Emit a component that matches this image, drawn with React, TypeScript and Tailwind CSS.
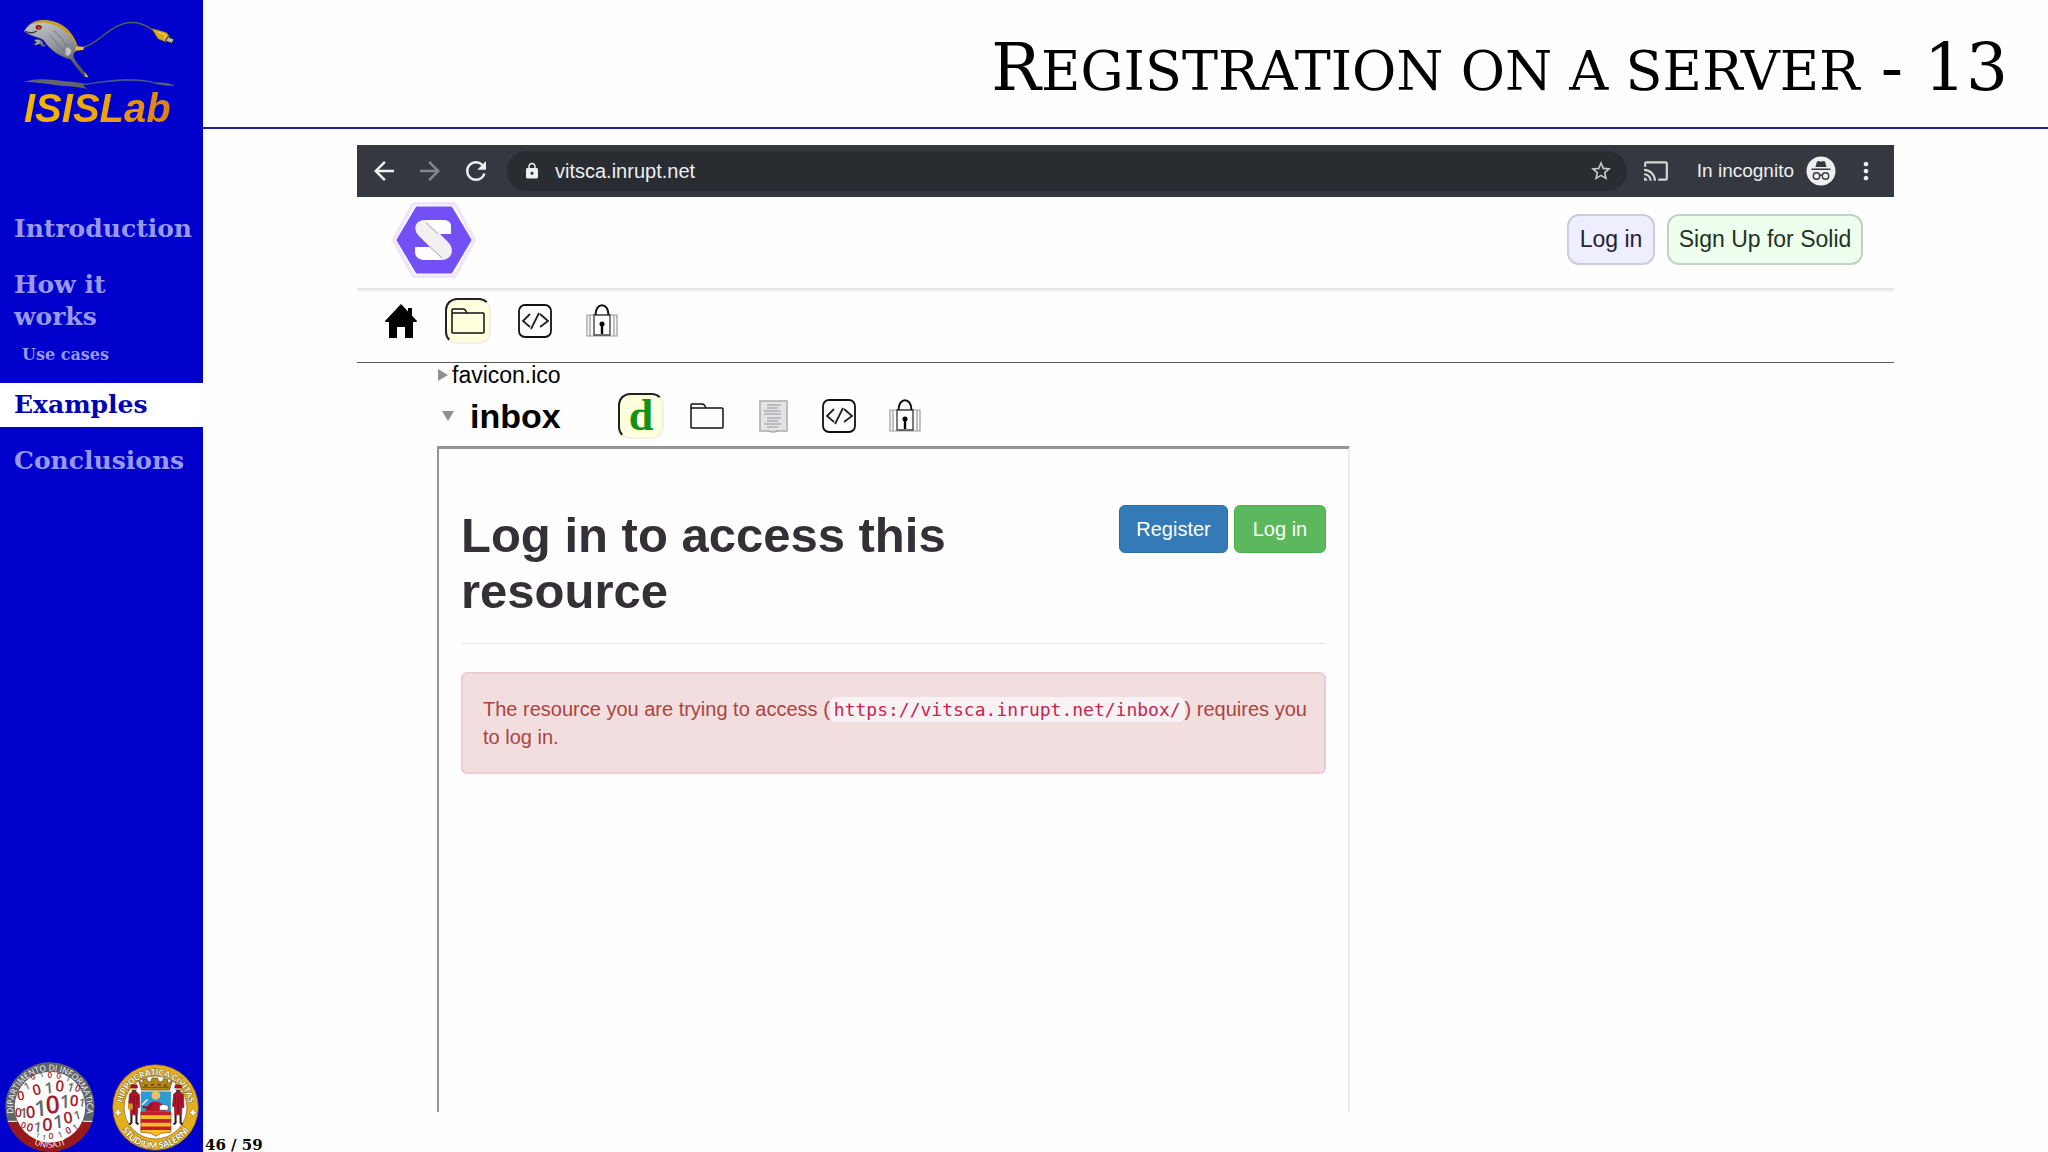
import type { ReactNode } from 'react'
import { MdArrowBack, MdArrowForward, MdCast, MdLock, MdMoreVert, MdRefresh, MdStarBorder } from 'react-icons/md'

const DIGITS = [
    { x: 88, y: 52, size: 24, rotate: -30, value: '0' },
    { x: 112, y: 46, size: 22, rotate: -15, value: '1' },
    { x: 134, y: 48, size: 24, rotate: 0, value: '0' },
    { x: 160, y: 50, size: 24, rotate: 10, value: '0' },
    { x: 186, y: 58, size: 24, rotate: 25, value: '1' },
    { x: 70, y: 82, size: 30, rotate: -25, value: '1' },
    { x: 99, y: 98, size: 44, rotate: -15, value: '0' },
    { x: 133, y: 94, size: 46, rotate: -5, value: '1' },
    { x: 163, y: 88, size: 46, rotate: 5, value: '0' },
    { x: 194, y: 88, size: 36, rotate: 15, value: '1' },
    { x: 214, y: 88, size: 28, rotate: 25, value: '0' },
    { x: 50, y: 114, size: 38, rotate: -10, value: '0' },
    { x: 40, y: 166, size: 36, rotate: 0, value: '0' },
    { x: 56, y: 168, size: 42, rotate: 0, value: '1' },
    { x: 78, y: 168, size: 50, rotate: -4, value: '0' },
    { x: 108, y: 162, size: 66, rotate: -4, value: '1' },
    { x: 145, y: 154, size: 74, rotate: -4, value: '0' },
    { x: 180, y: 138, size: 54, rotate: 0, value: '1' },
    { x: 207, y: 132, size: 46, rotate: 4, value: '0' },
    { x: 229, y: 134, size: 34, rotate: 10, value: '1' },
    { x: 52, y: 198, size: 26, rotate: 20, value: '0' },
    { x: 72, y: 208, size: 34, rotate: 15, value: '0' },
    { x: 97, y: 210, size: 42, rotate: 5, value: '1' },
    { x: 127, y: 208, size: 54, rotate: 0, value: '0' },
    { x: 162, y: 198, size: 54, rotate: -5, value: '1' },
    { x: 192, y: 184, size: 48, rotate: -10, value: '0' },
    { x: 220, y: 172, size: 36, rotate: -15, value: '1' },
    { x: 96, y: 226, size: 18, rotate: 20, value: '1' },
    { x: 116, y: 234, size: 22, rotate: 10, value: '1' },
    { x: 138, y: 232, size: 26, rotate: 0, value: '0' },
    { x: 168, y: 226, size: 24, rotate: -15, value: '1' },
    { x: 194, y: 214, size: 28, rotate: -25, value: '0' },
    { x: 216, y: 202, size: 24, rotate: -35, value: '1' },
]

const LabLogo = () => (
    <svg viewBox="0 0 480 228" className="w-40 h-[76px]" aria-hidden="true">
        <defs>
            <linearGradient id="body" x1="0" y1="0" x2="0.4" y2="1">
                <stop offset="0" stopColor="#c9ccd2" />
                <stop offset="0.5" stopColor="#9a9ca4" />
                <stop offset="1" stopColor="#55575f" />
            </linearGradient>
        </defs>
        <path d="M178 98 C236 88 272 20 336 20 C362 20 380 30 398 42" fill="none" stroke="#333b4c" strokeWidth="5" />
        <path d="M178 97 C236 87 272 19 336 19 C362 19 380 29 398 41" fill="none" stroke="#8c8f92" strokeWidth="1.5" />
        <path d="M396 38 L412 42 L440 50 L450 64 L438 78 L414 68 L404 52 Z" fill="#d9ab1c" stroke="#8d6c17" strokeWidth="1.5" />
        <path d="M414 48 L438 58 L432 68" fill="none" stroke="#f6dc66" strokeWidth="3" />
        <path d="M444 62 L462 70 L456 82 L436 75 Z" fill="#b8b8b8" stroke="#222" strokeWidth="3" />
        <path d="M42 72 C58 66 68 74 70 84 L58 84 L48 88 L40 84 L50 80 Z" fill="#a6a8ae" stroke="#333" strokeWidth="1.5" />
        <path d="M60 76 C66 86 62 90 76 88" fill="none" stroke="#777a82" strokeWidth="5" />
        <path d="M12 46 C32 10 74 6 112 20 C148 36 164 62 174 96 L170 104 C156 112 158 124 172 142 C188 160 196 174 204 184 L194 182 C180 168 164 148 152 130 C112 120 88 98 70 72 C52 62 28 60 12 46 Z" fill="url(#body)" stroke="#4c4e58" strokeWidth="1.5" />
        <path d="M22 32 C46 6 84 8 116 22 C148 38 164 66 174 92 C148 56 126 34 94 24 C66 16 42 20 22 32 Z" fill="#c79e20" />
        <path d="M168 90 L192 93 L190 102 L166 104 Z" fill="#e5bd25" />
        <path d="M140 92 C158 96 158 112 144 120 C132 118 132 104 140 92 Z" fill="#c4c6ca" stroke="#777982" strokeWidth="1.5" />
        <path d="M88 56 C108 72 118 98 140 110 M100 44 C122 58 130 76 140 92" fill="none" stroke="#74767f" strokeWidth="3" />
        <path d="M16 46 C30 52 42 52 50 44" fill="none" stroke="#3c3d46" strokeWidth="4" />
        <path d="M194 168 L206 184 L196 182 Z" fill="#e6bd43" />
        <ellipse cx="56" cy="34" rx="9" ry="7" fill="#73220e" />
        <circle cx="57" cy="35" r="4" fill="#e6390f" />
        <path d="M12 198 C52 184 98 192 134 196 C166 198 190 202 204 206 L188 208 L202 218 L164 212 C104 210 80 200 12 198 Z" fill="#63656d" />
        <path d="M190 206 C272 190 350 184 406 200 C440 200 452 204 462 208 C440 210 410 204 400 200 C350 188 272 194 190 206 Z" fill="#63656d" stroke="#4d568f" strokeWidth="2" />
    </svg>
)

const DepartmentSeal = () => (
    <svg viewBox="0 0 270 270" className="w-[90px] h-[90px]" role="img" aria-label="Dipartimento di Informatica">
        <defs>
            <path id="dept-top" d="M26 158 A111 111 0 1 1 244 158" />
            <path id="dept-bottom" d="M52 226 A128 128 0 0 0 218 226" />
        </defs>
        <circle cx="135" cy="135" r="134" fill="#606568" />
        <path d="M8 178 A134 134 0 0 0 262 178 L230 178 L135 200 L40 178 Z" fill="#98191b" />
        <circle cx="135" cy="135" r="106" fill="#fdfdfd" />
        <path d="M8 178 L36 178" stroke="#fff" strokeWidth="3" />
        <path d="M234 178 L262 178" stroke="#fff" strokeWidth="3" />
        <text fill="#fff" fontSize="25" className="font-['Open_Sans',sans-serif]">
            <textPath href="#dept-top" startOffset="50%" textAnchor="middle">DIPARTIMENTO DI INFORMATICA</textPath>
        </text>
        <text fill="#fff" fontSize="24" className="font-['Open_Sans',sans-serif]">
            <textPath href="#dept-bottom" startOffset="50%" textAnchor="middle">UNISA.IT</textPath>
        </text>
        {DIGITS.map(({ x, y, size, rotate, value }, i) => (
            <text
                key={i}
                x={x}
                y={y}
                fontSize={size}
                textAnchor="middle"
                fill={value === '0' ? '#a3202a' : '#666b6e'}
                transform={`rotate(${rotate} ${x} ${y})`}
                className="font-['Open_Sans',sans-serif] font-semibold"
            >
                {value}
            </text>
        ))}
    </svg>
)

const Doctor = ({ x }: { x: number }) => (
    <g transform={`translate(${x} 64)`}>
        <path d="M-14 26 L-6 20 L8 20 L16 28 L17 66 L11 66 L10 88 L-11 88 L-11 66 L-17 62 Z" fill="#b5152b" stroke="#3b0a12" strokeWidth="1.5" />
        <path d="M-8 88 L-8 112 L-14 117 M7 88 L7 112 L13 117" fill="none" stroke="#3a1418" strokeWidth="6" />
        <circle cx="0" cy="12" r="8" fill="#e8b48c" />
        <path d="M-11 8 L-9 -2 L9 -2 L11 8 Z" fill="#a6142a" stroke="#3b0a12" strokeWidth="1" />
        <path d="M-7 14 C-6 26 6 26 7 14 Z" fill="#4a3a36" />
        <path d="M-9 30 L-9 56 M9 30 L9 56 M0 28 L0 86" stroke="#5e0b18" strokeWidth="2" />
    </g>
)

const UniversitySeal = () => (
    <svg viewBox="0 0 260 260" className="w-[87px] h-[87px]" role="img" aria-label="Università di Salerno">
        <defs>
            <path id="uni-top" d="M29 134 A101 101 0 0 1 231 134" />
            <path id="uni-bottom" d="M11 134 A119 119 0 0 0 249 134" />
        </defs>
        <circle cx="130" cy="130" r="128" fill="#e5ae1d" stroke="#7c621f" strokeWidth="2" />
        <circle cx="130" cy="130" r="94" fill="#fdfdfd" stroke="#7c621f" strokeWidth="2" />
        <text fill="#fff" stroke="#7c621f" strokeWidth="3" paintOrder="stroke" fontSize="25" className="font-[Lato,sans-serif] font-bold">
            <textPath href="#uni-top" startOffset="50%" textAnchor="middle">HIPPOCRATICA CIVITAS</textPath>
        </text>
        <text fill="#fff" stroke="#7c621f" strokeWidth="3" paintOrder="stroke" fontSize="27" className="font-[Lato,sans-serif] font-bold">
            <textPath href="#uni-bottom" startOffset="50%" textAnchor="middle">STUDIUM SALERNI</textPath>
        </text>
        <path d="M18 132 L22 141 L30 145 L22 149 L18 158 L14 149 L6 145 L14 141 Z" fill="#fff" stroke="#7c621f" />
        <path d="M242 132 L246 141 L254 145 L246 149 L242 158 L238 149 L230 145 L238 141 Z" fill="#fff" stroke="#7c621f" />
        <path d="M88 78 L80 50 L92 58 L92 46 L104 44 L108 54 L116 52 L120 42 L136 42 L140 52 L150 54 L154 44 L166 46 L166 58 L180 50 L172 78 Z" fill="#b98619" stroke="#5d4511" strokeWidth="2" />
        <path d="M90 70 L170 70" stroke="#5d4511" strokeWidth="2" />
        <path d="M96 64 h10 M116 62 h10 M136 62 h10 M154 64 h10" stroke="#6d5215" strokeWidth="6" />
        <path d="M86 82 H176 V143 H86 Z" fill="#2f9bd3" />
        <path d="M100 142 C104 120 116 112 128 112 C144 112 154 120 162 142 Z" fill="#b5152b" />
        <circle cx="131" cy="94" r="13" fill="#f1c93c" />
        <circle cx="131" cy="97" r="8" fill="#e8b48c" />
        <path d="M90 122 L106 106" stroke="#fff" strokeWidth="4" />
        <path d="M92 128 L112 132 L120 118" fill="none" stroke="#8d1022" strokeWidth="6" />
        <path d="M142 124 L154 121 L168 124 V138 H142 Z" fill="#fff" stroke="#333" strokeWidth="1.5" />
        <path d="M86 143 H176 V204 L146 207 L131 216 L116 207 L86 204 Z" fill="#f4bf22" stroke="#5d1515" strokeWidth="1.5" />
        <path d="M86 148 H176 M86 170 H176 M86 192 H176" stroke="#c51c2c" strokeWidth="11" />
        <Doctor x={66} />
        <Doctor x={198} />
        <rect x="48" y="118" width="14" height="18" fill="#d99325" />
    </svg>
)

const SolidLogo = () => (
    <svg viewBox="0 0 84 76" className="w-[84px] h-[76px]" role="img" aria-label="Solid">
        <path d="M22 3 H62 L81 38 L62 73 H22 L3 38 Z" fill="#eee5ff" stroke="#eee5ff" strokeWidth="6" strokeLinejoin="round" />
        <path d="M24 6 H60 L78 38 L60 70 H24 L6 38 Z" fill="#fff" stroke="#fff" strokeWidth="5" strokeLinejoin="round" />
        <path d="M25 6 H59 L78 38 L59 70 H25 L6 38 Z" fill="#7350f5" stroke="#7350f5" strokeWidth="3" strokeLinejoin="round" />
        <path d="M23 45 H40 L51 58 H33 C27 58 23 55 23 50 Z" fill="#fff" />
        <path d="M59 32 H44 L33 18 H51 C56 18 59 20 59 24 Z" fill="#fff" />
        <path d="M33 18 C22 18 21 29 27 34 L51 58 C60 57 63 47 56 40 L36 20 Z" fill="#f3f0f1" />
        <path d="M34 21 L46 32 M38 45 L50 56" stroke="#aaa3ad" strokeWidth="1" />
    </svg>
)

const IncognitoIcon = () => (
    <svg viewBox="0 0 30 30" className="w-[30px] h-[30px]">
        <circle cx="15" cy="15" r="14.5" fill="#eeeff1" />
        <path d="M11 5.5 L13 5 L15 5.8 L17 5 L19 5.5 L20.5 11 H9.5 Z M5.5 12.5 H24.5 V14 H5.5 Z" fill="#35383e" />
        <circle cx="10.5" cy="20" r="3.2" fill="none" stroke="#35383e" strokeWidth="1.4" />
        <circle cx="19.5" cy="20" r="3.2" fill="none" stroke="#35383e" strokeWidth="1.4" />
        <path d="M13.5 19.5 Q15 18.5 16.5 19.5" fill="none" stroke="#35383e" strokeWidth="1.4" />
    </svg>
)

const HomeIcon = () => (
    <svg viewBox="0 0 34 34" className="w-[34px] h-[34px]">
        <path d="M17 0 L33 17 Q33 18 32 18 H29 V34 H21 V23 H13 V34 H5 V18 H2 Q1 18 1 17 Z" fill="#000" />
        <path d="M24 4 H28 V12 H24 Z" fill="#000" />
    </svg>
)

const FolderIcon = () => (
    <svg viewBox="0 0 34 34" className="w-[34px] h-[34px]">
        <path d="M1 29 V6 Q1 5 2 5 H12 Q14 5 15 7 L16 9 H32 Q33 9 33 10 V28 Q33 29 32 29 H2 Q1 29 1 28 M1 9 H16" fill="none" stroke="#111" strokeWidth="1.5" />
    </svg>
)

const SourceIcon = () => (
    <svg viewBox="0 0 34 34" className="w-[34px] h-[34px]">
        <rect x="1" y="1" width="32" height="32" rx="6" fill="none" stroke="#111" strokeWidth="1.8" />
        <path d="M12 10 L5 17 L12 23 M22 10 L30 17 L22 23 M21 9 L13 25" fill="none" stroke="#222" strokeWidth="1.8" />
    </svg>
)

const LockIcon = () => (
    <svg viewBox="0 0 34 34" className="w-[34px] h-[34px]">
        <path d="M2 11 H32 V32 H2 Z M5 11 V32 M29 11 V32" fill="#fafafa" stroke="#999" strokeWidth="1.2" />
        <path d="M9 11 H25 V31 H9 Z" fill="#fff" stroke="#444" strokeWidth="1.4" />
        <path d="M10.5 11 C10.5 -2 23.5 -2 23.5 11" fill="none" stroke="#111" strokeWidth="2" />
        <path d="M17 19 V30" stroke="#000" strokeWidth="2.4" />
        <circle cx="17" cy="20" r="2.5" fill="#000" />
    </svg>
)

const DocumentIcon = () => (
    <svg viewBox="0 0 34 34" className="w-[34px] h-[34px]">
        <path d="M4 2 H31 V32 H21 Q17 34 13 32 H4 Z" fill="#e4e4e5" stroke="#aaa" strokeWidth="1.5" />
        <path d="M11 6 H25 M11 9 H22 M8 12 H25 M8 15 H25 M11 19 H25 M11 22 H22 M8 25 H25 M11 28 H22" stroke="#b0b0b2" strokeWidth="1.3" />
    </svg>
)

interface PaneButtonProps {
    label: string
    active?: boolean
    children: ReactNode
}

const PaneButton = ({ label, active, children }: PaneButtonProps) => (
    <button
        type="button"
        aria-label={label}
        className={
            active
                ? 'flex h-[46px] w-[46px] items-center justify-center rounded-xl border-2 border-t-[#222] border-l-[#222] border-r-[#f1f1e6] border-b-[#f1f1e6] bg-[#ffffdd]'
                : 'flex h-[46px] w-[46px] items-center justify-center'
        }
    >
        {children}
    </button>
)

const Sidebar = () => (
    <aside className="flex w-[203px] shrink-0 flex-col bg-[#0000cc]">
        <div className="flex h-[207px] flex-col items-start pt-4 pl-5">
            <LabLogo />
            <p className="-mt-1 ml-1 bg-linear-to-r from-[#f2b705] via-[#eda40c] to-[#d97d16] bg-clip-text pr-1 font-['Liberation_Sans',Arial,sans-serif] text-[40px] leading-10 font-bold text-transparent italic">
                ISISLab
            </p>
        </div>
        <nav className="flex flex-1 flex-col text-[25px] leading-8 font-bold text-[#9999eb]">
            <a href="#introduction" className="block py-1.5 pl-3.5">Introduction</a>
            <a href="#how" className="mt-3 block w-40 py-1.5 pl-3.5">How it works</a>
            <a href="#use-cases" className="mt-1 block pl-[22px] text-base leading-6">Use cases</a>
            <a href="#examples" className="mt-4 block bg-white py-1.5 pl-3.5 text-[#0000b8]">Examples</a>
            <a href="#conclusions" className="mt-3 block py-1.5 pl-3.5">Conclusions</a>
        </nav>
        <div className="flex items-center justify-between pr-1 pl-[5px]">
            <DepartmentSeal />
            <UniversitySeal />
        </div>
    </aside>
)

const BrowserBar = () => (
    <div className="flex h-[52px] items-center bg-[#35383e] text-xl text-[#eeeff1]">
        <div className="flex items-center gap-4 pl-3">
            <button type="button" aria-label="Back"><MdArrowBack size={30} /></button>
            <button type="button" aria-label="Forward" className="text-[#85878b]"><MdArrowForward size={30} /></button>
            <button type="button" aria-label="Reload"><MdRefresh size={30} /></button>
        </div>
        <div className="ml-4 flex h-10 flex-1 items-center rounded-full bg-[#292c31] pr-3.5 pl-4">
            <MdLock size={18} className="shrink-0" />
            <input
                type="text"
                aria-label="Address"
                defaultValue="vitsca.inrupt.net"
                className="ml-3.5 min-w-0 flex-1 bg-transparent outline-none"
            />
            <button type="button" aria-label="Bookmark"><MdStarBorder size={24} className="text-[#c9cacd]" /></button>
        </div>
        <div className="flex items-center pr-3.5">
            <button type="button" aria-label="Cast" className="ml-4"><MdCast size={26} className="text-[#d5d6d8]" /></button>
            <span className="mr-3 ml-7 text-[19px]">In incognito</span>
            <IncognitoIcon />
            <button type="button" aria-label="Menu" className="ml-4"><MdMoreVert size={28} /></button>
        </div>
    </div>
)

const AccessFrame = () => (
    <section className="ml-20 flex w-[913px] flex-1 flex-col border-t-3 border-r-2 border-l-2 border-t-[#949496] border-r-[#ebe9ee] border-l-[#949496] px-[22px] pt-14">
        <div className="flex items-start justify-between border-b border-[#e6e4ea] pb-6">
            <h2 className="mt-0.5 w-[520px] text-[49px] leading-14 font-bold text-[#333136]">Log in to access this resource</h2>
            <div className="flex gap-1.5 text-xl text-white">
                <button type="button" className="h-12 w-[109px] rounded-md border border-[#2e6da4] bg-[#337ab7]">Register</button>
                <button type="button" className="h-12 w-[92px] rounded-md border border-[#4cae4c] bg-[#5cb85c]">Log in</button>
            </div>
        </div>
        <p className="mt-7 rounded-md border-2 border-[#ebccd1] bg-[#f2dede] py-[21px] pr-3 pl-5 text-xl leading-7 text-[#a94442]">
            The resource you are trying to access (
            <code className="rounded-md bg-[#f9f2f4] px-1 py-0.5 font-['DejaVu_Sans_Mono',monospace] text-lg leading-5 text-[#c7254e]">
                https://vitsca.inrupt.net/inbox/
            </code>
            ) requires you to log in.
        </p>
    </section>
)

const Browser = () => (
    <div className="flex flex-1 flex-col font-['Liberation_Sans',Arial,sans-serif] text-black">
        <BrowserBar />
        <header className="flex h-[91px] items-center justify-between pr-[31px] pb-1.5 pl-[35px]">
            <SolidLogo />
            <div className="flex gap-3 text-[23px]">
                <button type="button" className="h-[51px] w-[88px] rounded-xl border-2 border-[#cfcbdc] bg-[#eeeeff] text-[#222233]">Log in</button>
                <button type="button" className="h-[51px] w-[196px] rounded-xl border-2 border-[#c3d1c5] bg-[#eeffee] text-[#223322]">Sign Up for Solid</button>
            </div>
        </header>
        <div className="flex h-[75px] items-center gap-[21px] border-b border-[#5c5960] bg-linear-to-b from-[#e2e2e2] to-transparent bg-[length:100%_5px] bg-no-repeat pb-2 pl-[21px]">
            <PaneButton label="Home"><HomeIcon /></PaneButton>
            <PaneButton label="Folder" active><FolderIcon /></PaneButton>
            <PaneButton label="Source"><SourceIcon /></PaneButton>
            <PaneButton label="Sharing"><LockIcon /></PaneButton>
        </div>
        <div className="flex h-6 items-center gap-1 pl-[81px] text-[23px]">
            <svg viewBox="0 0 10 12" className="h-3 w-2.5"><path d="M0 0 L10 6 L0 12 Z" fill="#909093" /></svg>
            favicon.ico
        </div>
        <div className="flex h-[59px] items-center pb-0.5 pl-[85px]">
            <svg viewBox="0 0 12 10" className="h-2.5 w-3"><path d="M0 0 L12 0 L6 10 Z" fill="#909093" /></svg>
            <h1 className="w-[164px] pl-4 text-[34px] leading-10 font-bold">inbox</h1>
            <div className="flex gap-5">
                <PaneButton label="Data" active>
                    <span className="font-['Liberation_Serif',serif] text-[44px] leading-10 font-bold text-[#129212]">d</span>
                </PaneButton>
                <PaneButton label="Folder"><FolderIcon /></PaneButton>
                <PaneButton label="Document"><DocumentIcon /></PaneButton>
                <PaneButton label="Source"><SourceIcon /></PaneButton>
                <PaneButton label="Sharing"><LockIcon /></PaneButton>
            </div>
        </div>
        <AccessFrame />
    </div>
)

const App = () => {
    return (
        <div className="flex min-h-screen bg-[#fefefe] font-['DejaVu_Serif',serif]">
            <Sidebar />
            <main className="flex min-w-0 flex-1 flex-col">
                <div className="flex h-[129px] items-center justify-end border-b-2 border-[#2222a0] pt-2 pr-10 text-black">
                    <p className="text-[66px] leading-none uppercase">
                        R<span className="text-[54px]">egistration on a server</span> - 13
                    </p>
                </div>
                <div className="flex flex-1 flex-col px-[154px] pt-4">
                    <Browser />
                </div>
                <footer className="flex h-10 items-end pl-0.5 text-[15px] leading-[14px] font-bold text-black">46 / 59</footer>
            </main>
        </div>
    )
}

export default App
